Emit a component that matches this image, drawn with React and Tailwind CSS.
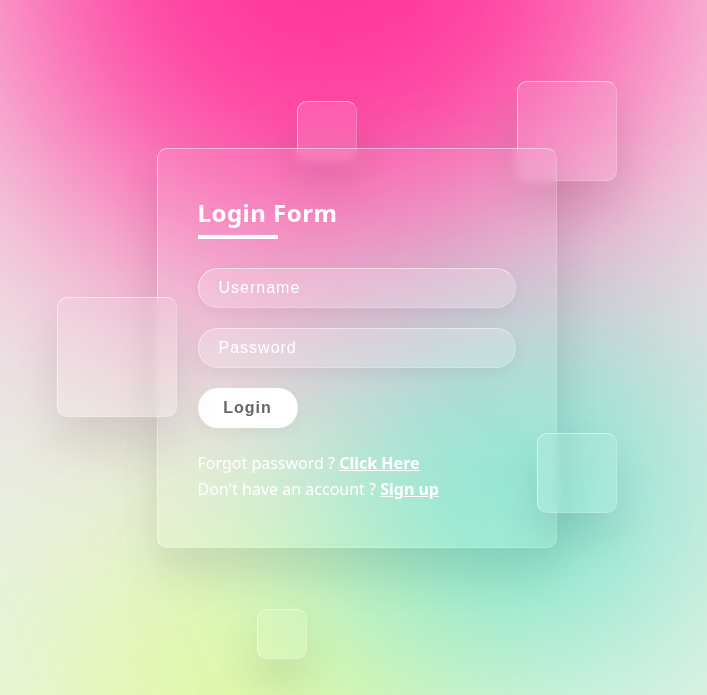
const glass =
  "border border-white/50 border-r-white/20 border-b-white/20 bg-white/10 backdrop-blur-[5px] shadow-[0_25px_45px_rgba(0,0,0,0.1)]";

// floating glass squares around the card
const squares = [
  "left-[360px] top-[-67px] w-[100px] h-[100px]",
  "left-[-100px] top-[149px] w-[120px] h-[120px] z-20",
  "left-[380px] top-[285px] w-[80px] h-[80px] z-20",
  "left-[100px] top-[461px] w-[50px] h-[50px]",
  "left-[140px] top-[-47px] w-[60px] h-[60px]",
];

const inputCls =
  "w-full h-10 rounded-[35px] px-5 bg-white/20 border border-white/50 border-r-white/20 border-b-white/20 shadow-[0_5px_15px_rgba(0,0,0,0.05)] text-white text-base tracking-[1px] placeholder:text-white outline-none";

function App() {
  return (
    <div className="relative w-full h-[695px] overflow-hidden bg-gradient-to-b from-[#f4e4ec] via-[#ece8e6] to-[#e6f4e4] flex items-center justify-center pl-[6px]">
      {/* colour blobs */}
      <div className="absolute left-[-20px] top-[-380px] w-[700px] h-[660px] rounded-full bg-[#ff359b] blur-[130px]" />
      <div className="absolute left-[40px] top-[520px] w-[420px] h-[380px] rounded-full bg-[#e4fa9a] blur-[110px] opacity-90" />
      <div className="absolute left-[330px] top-[330px] w-[360px] h-[320px] rounded-full bg-[#3fe0c4] blur-[120px] opacity-80" />

      <div className="relative w-[400px] h-[400px]">
        {squares.map((s, i) => (
          <div key={i} className={"absolute rounded-[10px] " + glass + " " + s} />
        ))}

        <div className={"relative z-10 w-[400px] h-[400px] rounded-[10px] px-10 pt-[48px] " + glass}>
          <h2
            className="relative text-white text-[24px] font-bold tracking-[0.5px] leading-[32px] mb-[39px]"
            style={{ fontFamily: '"Noto Sans", sans-serif' }}
          >
            Login Form
            <span className="absolute left-0 bottom-[-10px] w-20 h-1 bg-white" />
          </h2>
          <form className="flex flex-col gap-5" style={{ fontFamily: '"Liberation Sans", Arial, sans-serif' }}>
            <input type="text" placeholder="Username" className={inputCls} />
            <input type="password" placeholder="Password" className={inputCls} />
            <button
              type="button"
              className="w-[100px] h-10 rounded-[35px] bg-white text-[#666] font-bold text-base tracking-[1px] shadow-[0_5px_15px_rgba(0,0,0,0.05)]"
            >
              Login
            </button>
          </form>
          <div className="mt-[22px] text-white text-base leading-[26px]" style={{ fontFamily: '"Noto Sans", sans-serif' }}>
            <p>
              Forgot password ? <a href="#" className="font-bold underline">Click Here</a>
            </p>
            <p>
              Don't have an account ? <a href="#" className="font-bold underline">Sign up</a>
            </p>
          </div>
        </div>
      </div>
    </div>
  );
}

export default App;
